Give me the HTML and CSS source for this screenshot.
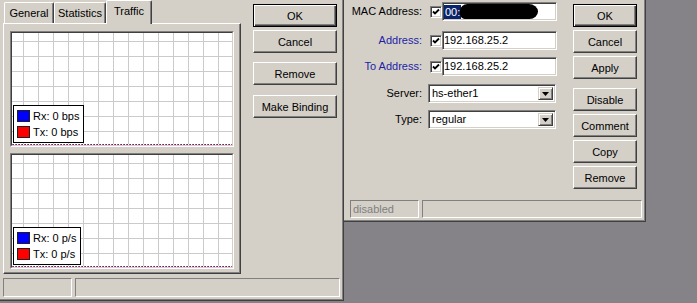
FILE: index.html
```html
<!DOCTYPE html>
<html>
<head>
<meta charset="utf-8">
<title>Host</title>
<link rel="stylesheet" href="styles.css">
</head>
<body>
<div class="desk">
  <div class="win win-left">
    <div class="main-left">
      <div class="tabs-area">
        <div class="tabs">
          <div class="tab tab-general">General</div>
          <div class="tab tab-stats">Statistics</div>
          <div class="tab tab-traffic active">Traffic</div>
        </div>
        <div class="page">
          <div class="graph">
            <div class="plot">
              <div class="legend">
                <div class="lg-row"><span class="sw blue"></span>Rx: 0 bps</div>
                <div class="lg-row"><span class="sw red"></span>Tx: 0 bps</div>
              </div>
            </div>
          </div>
          <div class="graph">
            <div class="plot">
              <div class="legend">
                <div class="lg-row"><span class="sw blue"></span>Rx: 0 p/s</div>
                <div class="lg-row"><span class="sw red"></span>Tx: 0 p/s</div>
              </div>
            </div>
          </div>
        </div>
      </div>
      <div class="btns btns-left">
        <button class="btn default">OK</button>
        <button class="btn">Cancel</button>
        <button class="btn sep">Remove</button>
        <button class="btn sep">Make Binding</button>
      </div>
    </div>
    <div class="status status-left">
      <div class="sfield s1"></div>
      <div class="sfield s2"></div>
    </div>
  </div>

  <div class="win win-right">
    <div class="main-right">
      <div class="form">
        <div class="frow r-mac">
          <div class="lbl">MAC Address:</div>
          <span class="chk"><svg viewBox="0 0 8 8" width="8" height="8"><polyline points="1,3.5 3,5.5 7,1.5" fill="none" stroke="#000" stroke-width="1.8"/></svg></span>
          <div class="field"><span class="sel">00:</span><span class="blot"></span></div>
        </div>
        <div class="frow r-addr">
          <div class="lbl blue-lbl">Address:</div>
          <span class="chk"><svg viewBox="0 0 8 8" width="8" height="8"><polyline points="1,3.5 3,5.5 7,1.5" fill="none" stroke="#000" stroke-width="1.8"/></svg></span>
          <div class="field">192.168.25.2</div>
        </div>
        <div class="frow r-to">
          <div class="lbl blue-lbl">To Address:</div>
          <span class="chk"><svg viewBox="0 0 8 8" width="8" height="8"><polyline points="1,3.5 3,5.5 7,1.5" fill="none" stroke="#000" stroke-width="1.8"/></svg></span>
          <div class="field">192.168.25.2</div>
        </div>
        <div class="frow r-srv">
          <div class="lbl">Server:</div>
          <div class="combo"><span class="combo-text">hs-ether1</span><span class="drop"><svg viewBox="0 0 7 4" width="7" height="4"><polygon points="0,0 7,0 3.5,4" fill="#000"/></svg></span></div>
        </div>
        <div class="frow r-type">
          <div class="lbl">Type:</div>
          <div class="combo"><span class="combo-text">regular</span><span class="drop"><svg viewBox="0 0 7 4" width="7" height="4"><polygon points="0,0 7,0 3.5,4" fill="#000"/></svg></span></div>
        </div>
      </div>
      <div class="btns btns-right">
        <button class="btn default">OK</button>
        <button class="btn">Cancel</button>
        <button class="btn">Apply</button>
        <button class="btn sep">Disable</button>
        <button class="btn">Comment</button>
        <button class="btn">Copy</button>
        <button class="btn">Remove</button>
      </div>
    </div>
    <div class="status status-right">
      <div class="sfield r1">disabled</div>
      <div class="sfield r2"></div>
    </div>
  </div>
</div>
</body>
</html>
```

FILE: styles.css
```css
html, body {
  margin: 0;
  padding: 0;
}
body {
  background: #858388;
  font-family: "Liberation Sans", Arial, sans-serif;
  font-size: 11px;
  color: #000;
}
.desk {
  position: relative;
  width: 697px;
  height: 303px;
  overflow: hidden;
  background: #858388;
}

/* windows */
.win {
  position: absolute;
  top: 0;
  box-sizing: border-box;
  background: #d4d0c8;
  border-right: 1px solid #404040;
  border-bottom: 1px solid #404040;
  box-shadow: inset -1px -1px #808080;
  display: flex;
  flex-direction: column;
}
.win-left {
  left: 0;
  width: 344px;
  height: 301px;
  padding: 0 2px 0 3px;
}
.win-right {
  left: 344px;
  width: 302px;
  height: 222px;
}

/* left window */
.main-left {
  display: flex;
  height: 274px;
}
.tabs-area {
  width: 238px;
  display: flex;
  flex-direction: column;
}
.tabs {
  display: flex;
  align-items: flex-end;
  height: 23px;
  padding-left: 1px;
  position: relative;
  z-index: 1;
}
.tab {
  box-sizing: border-box;
  height: 21px;
  border: 1px solid;
  border-color: #fff #404040 transparent #fff;
  border-bottom: none;
  border-radius: 2px 2px 0 0;
  box-shadow: inset -1px 0 #808080;
  background: #d4d0c8;
  text-align: center;
  line-height: 21px;
  white-space: nowrap;
}
.tab-general { width: 50px; }
.tab-stats { width: 52px; }
.tab-traffic { width: 46px; }
.tab.active {
  height: 24px;
  margin-bottom: -1px;
  line-height: 20px;
}
.page {
  box-sizing: border-box;
  height: 251px;
  border: 1px solid;
  border-color: #fff #404040 #404040 #fff;
  box-shadow: inset -1px -1px #808080;
  padding: 7px 6px 4px 6px;
  display: flex;
  flex-direction: column;
  gap: 6px;
}
.graph {
  box-sizing: border-box;
  height: 116px;
  border: 1px solid;
  border-color: #808080 #fff #fff #808080;
}
.plot {
  position: relative;
  box-sizing: border-box;
  height: 100%;
  border: 1px solid;
  border-color: #404040 #d4d0c8 #d4d0c8 #404040;
  background-color: #fff;
  background-image:
    repeating-linear-gradient(90deg, #c04080 0 1px, #5a2a80 1px 2px, #ffffff 2px 3px),
    linear-gradient(90deg, #cbcbcb 1px, transparent 1px),
    linear-gradient(180deg, #cbcbcb 1px, transparent 1px);
  background-size: 100% 1px, 15px 15px, 15px 15px;
  background-repeat: no-repeat, repeat, repeat;
  background-position: left bottom, left 11px bottom 14px, left 11px bottom 14px;
}
.legend {
  position: absolute;
  left: 1px;
  bottom: 2px;
  border: 1px solid #000;
  background: #fff;
  padding: 2px 4px 2px 3px;
}
.lg-row {
  display: flex;
  align-items: center;
  gap: 3px;
  height: 16px;
  white-space: nowrap;
}
.sw {
  box-sizing: border-box;
  width: 13px;
  height: 12px;
  border: 1px solid #202020;
}
.sw.blue { background: #0000ff; }
.sw.red { background: #ff0000; }

/* buttons */
.btns {
  display: flex;
  flex-direction: column;
  padding-top: 4px;
  gap: 3px;
}
.btns-left {
  margin-left: 12px;
}
.btns-left .btn { width: 84px; }
.btns-right .btn { width: 64px; }
.btn {
  box-sizing: border-box;
  height: 23px;
  margin: 0;
  padding: 0;
  background: #d4d0c8;
  color: #000;
  font-family: "Liberation Sans", Arial, sans-serif;
  font-size: 11px;
  border: 1px solid;
  border-color: #fff #404040 #404040 #fff;
  border-radius: 0;
  box-shadow: inset -1px -1px #808080;
  text-align: center;
  white-space: nowrap;
}
.btn.default {
  border-color: #000;
  box-shadow: inset 1px 1px #fff, inset -1px -1px #404040, inset -2px -2px #808080;
}
.btns-left .btn.sep { margin-top: 6px; }
.btns-left .btn.sep + .btn.sep { margin-top: 7px; }
.btns-right .btn.sep { margin-top: 6px; }

/* status bars */
.status {
  display: flex;
  gap: 3px;
}
.status-left {
  margin-top: 4px;
  height: 19px;
}
.sfield {
  box-sizing: border-box;
  height: 100%;
  border: 1px solid;
  border-color: #808080 #fff #fff #808080;
  color: #808080;
  line-height: 16px;
  padding-left: 2px;
  white-space: nowrap;
}
.s1 { width: 69px; }
.s2 { flex: 1; margin-right: 1px; }
.status-right {
  height: 18px;
  padding-left: 6px;
}
.r1 { width: 69px; }
.r2 { flex: 1; margin-right: 3px; }

/* right window */
.main-right {
  display: flex;
  height: 200px;
}
.form {
  width: 213px;
  display: flex;
  flex-direction: column;
}
.frow {
  display: flex;
  align-items: center;
  height: 19px;
}
.r-mac { margin-top: 2px; }
.r-addr { margin-top: 10px; }
.r-to { margin-top: 7px; }
.r-srv { margin-top: 8px; }
.r-type { margin-top: 7px; }
.lbl {
  width: 78px;
  margin-right: 6px;
  text-align: right;
  line-height: 19px;
  white-space: nowrap;
}
.blue-lbl { color: #1e1ea6; }
.chk {
  box-sizing: border-box;
  width: 12px;
  height: 12px;
  margin-left: 2px;
  padding: 1px;
  border: 1px solid;
  border-color: #808080 #fff #fff #808080;
  box-shadow: inset 1px 1px #404040, inset -1px -1px #d4d0c8;
  background: #fff;
  display: flex;
}
.chk svg { display: block; }
.field {
  box-sizing: border-box;
  width: 115px;
  height: 19px;
  border: 1px solid;
  border-color: #808080 #fff #fff #808080;
  box-shadow: inset 1px 1px #404040, inset -1px -1px #d4d0c8;
  background: #fff;
  padding-left: 1px;
  line-height: 17px;
  white-space: nowrap;
  overflow: hidden;
  display: flex;
  align-items: center;
}
.sel {
  background: #0a246a;
  color: #fff;
  line-height: 14px;
  padding: 0 1px;
}
.blot {
  display: inline-block;
  width: 78px;
  height: 15px;
  background: #000;
  border-radius: 8px 10px 9px 5px / 7px 8px 8px 6px;
  margin-left: -1px;
}
.combo {
  box-sizing: border-box;
  width: 128px;
  height: 19px;
  border: 1px solid;
  border-color: #808080 #fff #fff #808080;
  box-shadow: inset 1px 1px #404040, inset -1px -1px #d4d0c8;
  background: #fff;
  display: flex;
  align-items: stretch;
  padding: 2px;
}
.combo-text {
  flex: 1;
  line-height: 13px;
  padding-left: 1px;
  white-space: nowrap;
}
.drop {
  box-sizing: border-box;
  width: 15px;
  border: 1px solid;
  border-color: #d4d0c8 #404040 #404040 #d4d0c8;
  box-shadow: inset 1px 1px #fff, inset -1px -1px #808080;
  background: #d4d0c8;
  display: flex;
  align-items: center;
  justify-content: center;
}
.drop svg { display: block; }
.btns-right {
  margin-left: 16px;
}
```
